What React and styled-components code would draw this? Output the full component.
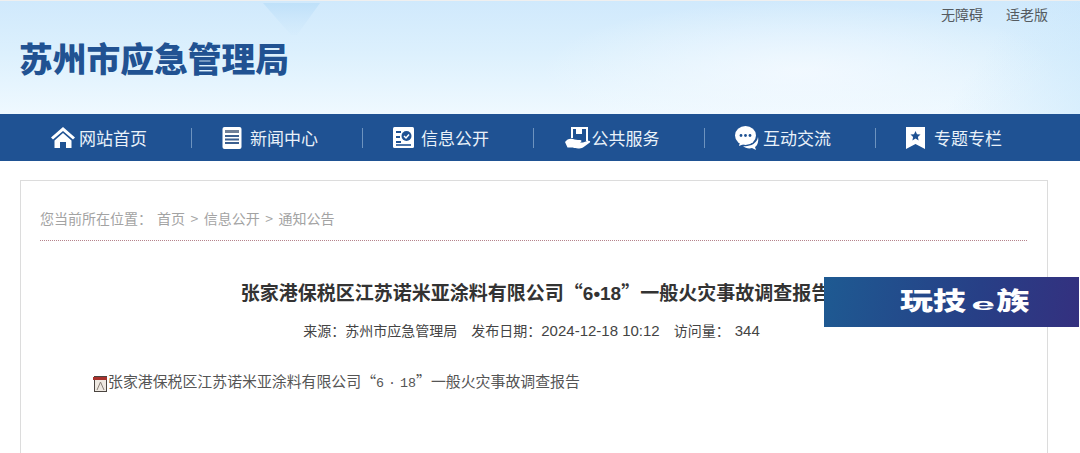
import React from "react";
import styled, { createGlobalStyle } from "styled-components";

const Global = createGlobalStyle`
  html, body { margin: 0; padding: 0; background: #fff; }
  body { width: 1080px; height: 453px; overflow: hidden; font-family: "Noto Sans CJK SC", "Liberation Sans", sans-serif; }
`;

const Page = styled.div`
  position: relative;
  width: 1080px;
  height: 453px;
  overflow: hidden;
`;

const Header = styled.header`
  height: 113px;
  border-top: 1px solid #efefef;
  padding: 0 32px 0 19px;
  display: flex;
  align-items: flex-start;
  justify-content: space-between;
  background:
    linear-gradient(125deg, transparent 88%, rgba(190, 226, 250, 0.45) 100%),
    radial-gradient(ellipse 260px 70px at 800px 70px, rgba(245, 250, 255, 0.8), transparent),
    linear-gradient(180deg, #d0e9fc 0%, #dcf0fd 45%, #eff9ff 100%);
`;

const Logo = styled.h1`
  margin: 35px 0 0;
  font-size: 33.75px;
  line-height: 44px;
  font-weight: 900;
  color: #215292;
  white-space: nowrap;
`;

const Shard = styled.svg`
  position: absolute;
  left: 263px;
  top: 1px;
`;

const TopLinks = styled.div`
  display: flex;
  gap: 23px;
  margin-top: 3px;
  font-size: 14px;
  line-height: 20px;
  color: #555b60;
`;

const Nav = styled.nav`
  height: 47px;
  padding-left: 21px;
  display: flex;
  align-items: center;
  background: #1f5293;
`;

const NavItem = styled.a`
  width: 171px;
  height: 20px;
  padding-right: 14px;
  display: flex;
  align-items: center;
  justify-content: center;
  gap: ${(p) => p.$gap}px;
  box-sizing: border-box;
  border-right: 1px solid ${(p) => (p.$last ? "transparent" : "#6d93bf")};
  color: #e9f1f9;
  font-size: 17px;
  white-space: nowrap;
`;

const Card = styled.main`
  margin: 19px 32px 0 20px;
  height: 300px;
  padding: 0 20px 0 19px;
  border: 1px solid #dcdcdc;
  border-bottom: none;
  background: #fff;
`;

const Crumbs = styled.div`
  height: 60px;
  padding-top: 27px;
  box-sizing: border-box;
  display: flex;
  font-size: 14px;
  line-height: 20px;
  color: #a3a3a3;
  white-space: nowrap;
  border-bottom: 1px dotted #b5838c;
`;

const CrumbLabel = styled.span`
  margin-right: 5px;
`;

const CrumbSep = styled.span`
  margin: 0 5.5px;
`;

const Title = styled.h2`
  margin: 37px 0 0;
  padding-left: 4px;
  font-size: 19px;
  line-height: 28px;
  font-weight: 700;
  color: #333;
  text-align: center;
  white-space: nowrap;
`;

const Latin = styled.span`
  font-family: "Liberation Sans", sans-serif;
`;

const Meta = styled.div`
  margin-top: 12px;
  padding-right: 4px;
  display: flex;
  justify-content: center;
  gap: 14px;
  font-size: 14px;
  line-height: 20px;
  color: #444;
  white-space: nowrap;
`;

const MetaValue = styled(Latin)`
  font-size: 15px;
`;

const MetaCount = styled(MetaValue)`
  margin-left: 5px;
`;

const Attachment = styled.div`
  margin: 29px 0 0 53px;
  display: flex;
  align-items: center;
  font-size: 14.9px;
  line-height: 22px;
  color: #555;
  white-space: nowrap;
`;

const Digits = styled.span`
  font-family: "Liberation Mono", monospace;
  font-size: 13.33px;
`;

const Dot = styled.span`
  display: inline-block;
  width: 16px;
  text-align: center;
`;

const FileIcon = styled.svg`
  margin-top: 2px;
  flex: none;
`;

const Badge = styled.div`
  position: absolute;
  left: 824px;
  top: 277px;
  width: 255px;
  height: 50px;
  display: flex;
  align-items: center;
  padding-left: 76px;
  box-sizing: border-box;
  background: linear-gradient(100deg, #1e5a92 0%, #273f86 60%, #34307f 100%);
`;

const BadgeText = styled.div`
  display: flex;
  align-items: baseline;
  transform: scaleX(1.32);
  transform-origin: left center;
  color: #fff;
  font-size: 25px;
  font-weight: 900;
  line-height: 50px;
  white-space: nowrap;
`;

const BadgeE = styled.span`
  display: inline-block;
  width: 19px;
  margin-left: 4px;
  font-family: "Liberation Sans", sans-serif;
  font-size: 17px;
  font-weight: 700;
  transform: scaleX(1.9);
  transform-origin: left center;
`;

const HomeIcon = () => (
  <svg width="24" height="21" viewBox="0 0 24 21" fill="#fff">
    <path d="M12 0 L24 10.5 L22 12.6 L12 4 L2 12.6 L0 10.5 Z" />
    <path d="M12 6 L20.5 13.4 V21 H15 V15 H9 V21 H3.5 V13.4 Z" />
  </svg>
);

const NewsIcon = () => (
  <svg width="20" height="22" viewBox="0 0 20 22">
    <rect width="19" height="22" x="0.5" rx="2" fill="#fff" />
    <rect x="3" y="3" width="14" height="3" fill="#6f7f97" />
    <path d="M3 9h14M3 12.5h14M3 16h14" stroke="#3b5f90" strokeWidth="1.8" />
  </svg>
);

const InfoIcon = () => (
  <svg width="21" height="21" viewBox="0 0 21 21">
    <rect width="21" height="21" rx="1.5" fill="#fff" />
    <path d="M3 5h5M3 10h4M3 15h5" stroke="#1f5293" strokeWidth="1.8" />
    <circle cx="13.5" cy="9" r="5" fill="#1f5293" />
    <path d="M11 9l2 2 3-3.6" stroke="#fff" strokeWidth="1.5" fill="none" />
    <path d="M3 18h15" stroke="#1f5293" strokeWidth="1.6" />
  </svg>
);

const ServiceIcon = () => (
  <svg width="26" height="22" viewBox="0 0 26 22" fill="#fff">
    <path d="M6 0h17v14h-2V2h-4v5H11V2H8v9H6z" />
    <path d="M0 15c2-3 5-4 8-3 2 .8 4 1 7 1 2 0 2 2 0 2.4h-3 6l5-1.6c2-.5 3 1 1.500 2L18 20.500c-3 1.500-8 1-10 0H2.500z" />
  </svg>
);

const ChatIcon = () => (
  <svg width="24" height="24" viewBox="0 0 24 24">
    <path d="M23 11c1 5-1 9-3 10l1 3-4-2c-3 1-7 0-9-2 6 1 14-2 15-9z" fill="#fff" />
    <ellipse cx="10.500" cy="9.500" rx="10.500" ry="9.500" fill="#fff" />
    <path d="M5 16l-1 4 5-2z" fill="#fff" />
    <circle cx="6" cy="9.500" r="1.400" fill="#1f5293" />
    <circle cx="10.500" cy="9.500" r="1.400" fill="#1f5293" />
    <circle cx="15" cy="9.500" r="1.400" fill="#1f5293" />
  </svg>
);

const BookmarkIcon = () => (
  <svg width="19" height="22" viewBox="0 0 19 22">
    <path d="M0 0h19v22l-9.500-5L0 22z" fill="#fff" />
    <path d="M9.500 4l1.500 3.200 3.500.4-2.600 2.300.7 3.500-3.100-1.800-3.100 1.800.7-3.500L4.500 7.600 8 7.200z" fill="#1f5293" />
  </svg>
);

const items = [
  { label: "网站首页", Icon: HomeIcon, gap: 4 },
  { label: "新闻中心", Icon: NewsIcon, gap: 8 },
  { label: "信息公开", Icon: InfoIcon, gap: 7 },
  { label: "公共服务", Icon: ServiceIcon, gap: 1 },
  { label: "互动交流", Icon: ChatIcon, gap: 4 },
  { label: "专题专栏", Icon: BookmarkIcon, gap: 9 },
];

export default function App() {
  return (
    <Page>
      <Global />
      <Header>
        <Logo>苏州市应急管理局</Logo>
        <Shard width="60" height="34" viewBox="0 0 60 34">
          <defs>
            <linearGradient id="shardFill" x1="0" y1="0" x2="0" y2="1">
              <stop offset="0" stopColor="#bcdff9" stopOpacity="0.85" />
              <stop offset="1" stopColor="#cfe8fb" stopOpacity="0.2" />
            </linearGradient>
          </defs>
          <path d="M0 2 H57 L34 34 H28 Z" fill="url(#shardFill)" />
        </Shard>
        <TopLinks>
          <span>无障碍</span>
          <span>适老版</span>
        </TopLinks>
      </Header>
      <Nav>
        {items.map(({ label, Icon, gap }, i) => (
          <NavItem key={label} $gap={gap} $last={i === items.length - 1}>
            <Icon />
            {label}
          </NavItem>
        ))}
      </Nav>
      <Card>
        <Crumbs>
          <CrumbLabel>您当前所在位置：</CrumbLabel>
          <span>首页</span>
          <CrumbSep>&gt;</CrumbSep>
          <span>信息公开</span>
          <CrumbSep>&gt;</CrumbSep>
          <span>通知公告</span>
        </Crumbs>
        <Title>
          张家港保税区江苏诺米亚涂料有限公司“<Latin>6•18</Latin>”一般火灾事故调查报告
        </Title>
        <Meta>
          <span>来源：苏州市应急管理局</span>
          <span>
            发布日期：<MetaValue>2024-12-18 10:12</MetaValue>
          </span>
          <span>
            访问量：<MetaCount>344</MetaCount>
          </span>
        </Meta>
        <Attachment>
          <FileIcon width="15" height="17" viewBox="0 0 15 17">
            <rect x="1.500" y="1.500" width="12" height="15" fill="#eee9e2" stroke="#4a4440" />
            <path d="M4 15L7.500 7l3.500 8" stroke="#8a8078" fill="none" />
            <rect x="0" y="2" width="14" height="3" fill="#a8312c" />
          </FileIcon>
          <span>
            张家港保税区江苏诺米亚涂料有限公司“
            <Digits>
              6<Dot>·</Dot>18
            </Digits>
            ”一般火灾事故调查报告
          </span>
        </Attachment>
      </Card>
      <Badge>
        <BadgeText>
          玩技<BadgeE>e</BadgeE>族
        </BadgeText>
      </Badge>
    </Page>
  );
}
